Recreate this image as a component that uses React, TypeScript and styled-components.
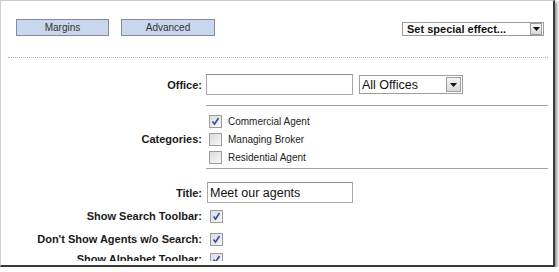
import React from 'react';
import styled, { createGlobalStyle } from 'styled-components';

const Global = createGlobalStyle`
  html, body { margin: 0; padding: 0; background: #fff; }
  body { font-family: "Liberation Sans", Arial, sans-serif; color: #1a1a1a; }
  * { box-sizing: border-box; }
`;

const Frame = styled.div`
  box-sizing: content-box;
  width: 552px;
  height: 264px;
  border-top: 1px solid #cdcdcd;
  border-left: 1px solid #cdcdcd;
  border-right: 2px solid #3a3a3a;
  border-bottom: 2px solid #3a3a3a;
  box-shadow: 2px 2px 3px rgba(0, 0, 0, 0.45);
  background: #fff;
  overflow: hidden;
`;

const Viewport = styled.div`
  height: 260px;
  overflow: hidden;
  padding: 0 5px 0 7px;
`;

const TopBar = styled.div`
  display: flex;
  align-items: flex-end;
  margin-top: 18px;
  padding: 0 4px 0 8px;
  gap: 12px;
`;

const TabButton = styled.div<{ $w: number }>`
  width: ${(p) => p.$w}px;
  height: 17px;
  background: #c9d7ee;
  border: 1px solid #868b95;
  font-size: 10px;
  color: #333;
  display: flex;
  align-items: center;
  justify-content: center;
`;

const EffectSelect = styled.div`
  margin-left: auto;
  width: 142px;
  height: 14px;
  border: 1px solid #9a9a9a;
  display: flex;
  align-items: center;
  justify-content: space-between;
  padding-left: 4px;
  font-size: 11px;
  font-weight: bold;
  color: #111;
`;

const ArrowBox = styled.span<{ $size: number }>`
  width: ${(p) => p.$size}px;
  height: ${(p) => p.$size}px;
  margin-right: 1px;
  background: linear-gradient(#f4f4f4, #d9d9d9);
  border: 1px solid #9d9d9d;
  display: flex;
  align-items: center;
  justify-content: center;
  flex: none;
`;

const Dotted = styled.div`
  margin-top: 21px;
  border-top: 1px dotted #b4b4b4;
`;

const Row = styled.div<{ $mt: number }>`
  display: grid;
  grid-template-columns: 194px 1fr;
  column-gap: 4px;
  margin-top: ${(p) => p.$mt}px;
`;

const Label = styled.div`
  text-align: right;
  font-size: 11px;
  font-weight: bold;
  color: #1a1a1a;
  align-self: center;
  white-space: nowrap;
`;

const Field = styled.div<{ $ml?: number }>`
  display: flex;
  align-items: center;
  gap: 6px;
  margin-left: ${(p) => p.$ml ?? 0}px;
`;

const TextInput = styled.div<{ $w: number }>`
  width: ${(p) => p.$w}px;
  height: 21px;
  border: 1px solid #a9a9a9;
  border-top-color: #8e8e8e;
  padding-left: 2px;
  font-size: 12.5px;
  color: #111;
  display: flex;
  align-items: center;
`;

const OfficeSelect = styled.div`
  width: 104px;
  height: 19px;
  border: 1px solid #9e9e9e;
  display: flex;
  align-items: center;
  justify-content: space-between;
  padding-left: 2px;
  font-size: 12.5px;
  color: #111;
`;

const Divider = styled.div<{ $mt: number }>`
  grid-column: 2;
  margin-top: ${(p) => p.$mt}px;
  border-top: 1px solid #a3a3a3;
`;

const CheckList = styled.div`
  display: flex;
  flex-direction: column;
  padding-left: 3px;
`;

const CheckItem = styled.div`
  height: 18px;
  display: flex;
  align-items: center;
  gap: 6px;
  font-size: 10px;
  color: #222;
`;

const Box = styled.span`
  width: 13px;
  height: 13px;
  border: 1px solid #9c9c9c;
  background: linear-gradient(135deg, #dcdcdc, #f7f7f7);
  display: flex;
  align-items: center;
  justify-content: center;
  flex: none;
`;

const CheckRow = styled.div`
  height: 18px;
  display: flex;
  align-items: center;
  padding-left: 4px;
`;

const Arrow = () => (
  <svg width="7" height="4" viewBox="0 0 7 4">
    <path d="M0 0 L7 0 L3.5 4 Z" fill="#111" />
  </svg>
);

const Check = ({ on }: { on: boolean }) => (
  <Box>
    {on && (
      <svg width="11" height="11" viewBox="0 0 11 11">
        <path d="M2.5 5.5 L4.5 8.2 L8.5 2" fill="none" stroke="#3348a6" strokeWidth="1.6" />
      </svg>
    )}
  </Box>
);

const categories = [
  { name: 'Commercial Agent', on: true },
  { name: 'Managing Broker', on: false },
  { name: 'Residential Agent', on: false },
];

const toggles = [
  { label: 'Show Search Toolbar:', mt: 4 },
  { label: "Don't Show Agents w/o Search:", mt: 5 },
  { label: 'Show Alphabet Toolbar:', mt: 2 },
];

export default function App() {
  return (
    <>
      <Global />
      <Frame>
        <Viewport>
          <TopBar>
            <TabButton $w={93}>Margins</TabButton>
            <TabButton $w={94}>Advanced</TabButton>
            <EffectSelect>
              <span>Set special effect...</span>
              <ArrowBox $size={12}>
                <Arrow />
              </ArrowBox>
            </EffectSelect>
          </TopBar>
          <Dotted />
          <Row $mt={16}>
            <Label>Office:</Label>
            <Field>
              <TextInput $w={147} />
              <OfficeSelect>
                <span>All Offices</span>
                <ArrowBox $size={15}>
                  <Arrow />
                </ArrowBox>
              </OfficeSelect>
            </Field>
          </Row>
          <Row $mt={0}>
            <Divider $mt={10} />
          </Row>
          <Row $mt={6}>
            <Label>Categories:</Label>
            <CheckList>
              {categories.map((c) => (
                <CheckItem key={c.name}>
                  <Check on={c.on} />
                  <span>{c.name}</span>
                </CheckItem>
              ))}
            </CheckList>
          </Row>
          <Row $mt={0}>
            <Divider $mt={2} />
          </Row>
          <Row $mt={13}>
            <Label>Title:</Label>
            <Field $ml={1}>
              <TextInput $w={146}>Meet our agents</TextInput>
            </Field>
          </Row>
          {toggles.map((t) => (
            <Row $mt={t.mt} key={t.label}>
              <Label>{t.label}</Label>
              <CheckRow>
                <Check on={true} />
              </CheckRow>
            </Row>
          ))}
        </Viewport>
      </Frame>
    </>
  );
}
